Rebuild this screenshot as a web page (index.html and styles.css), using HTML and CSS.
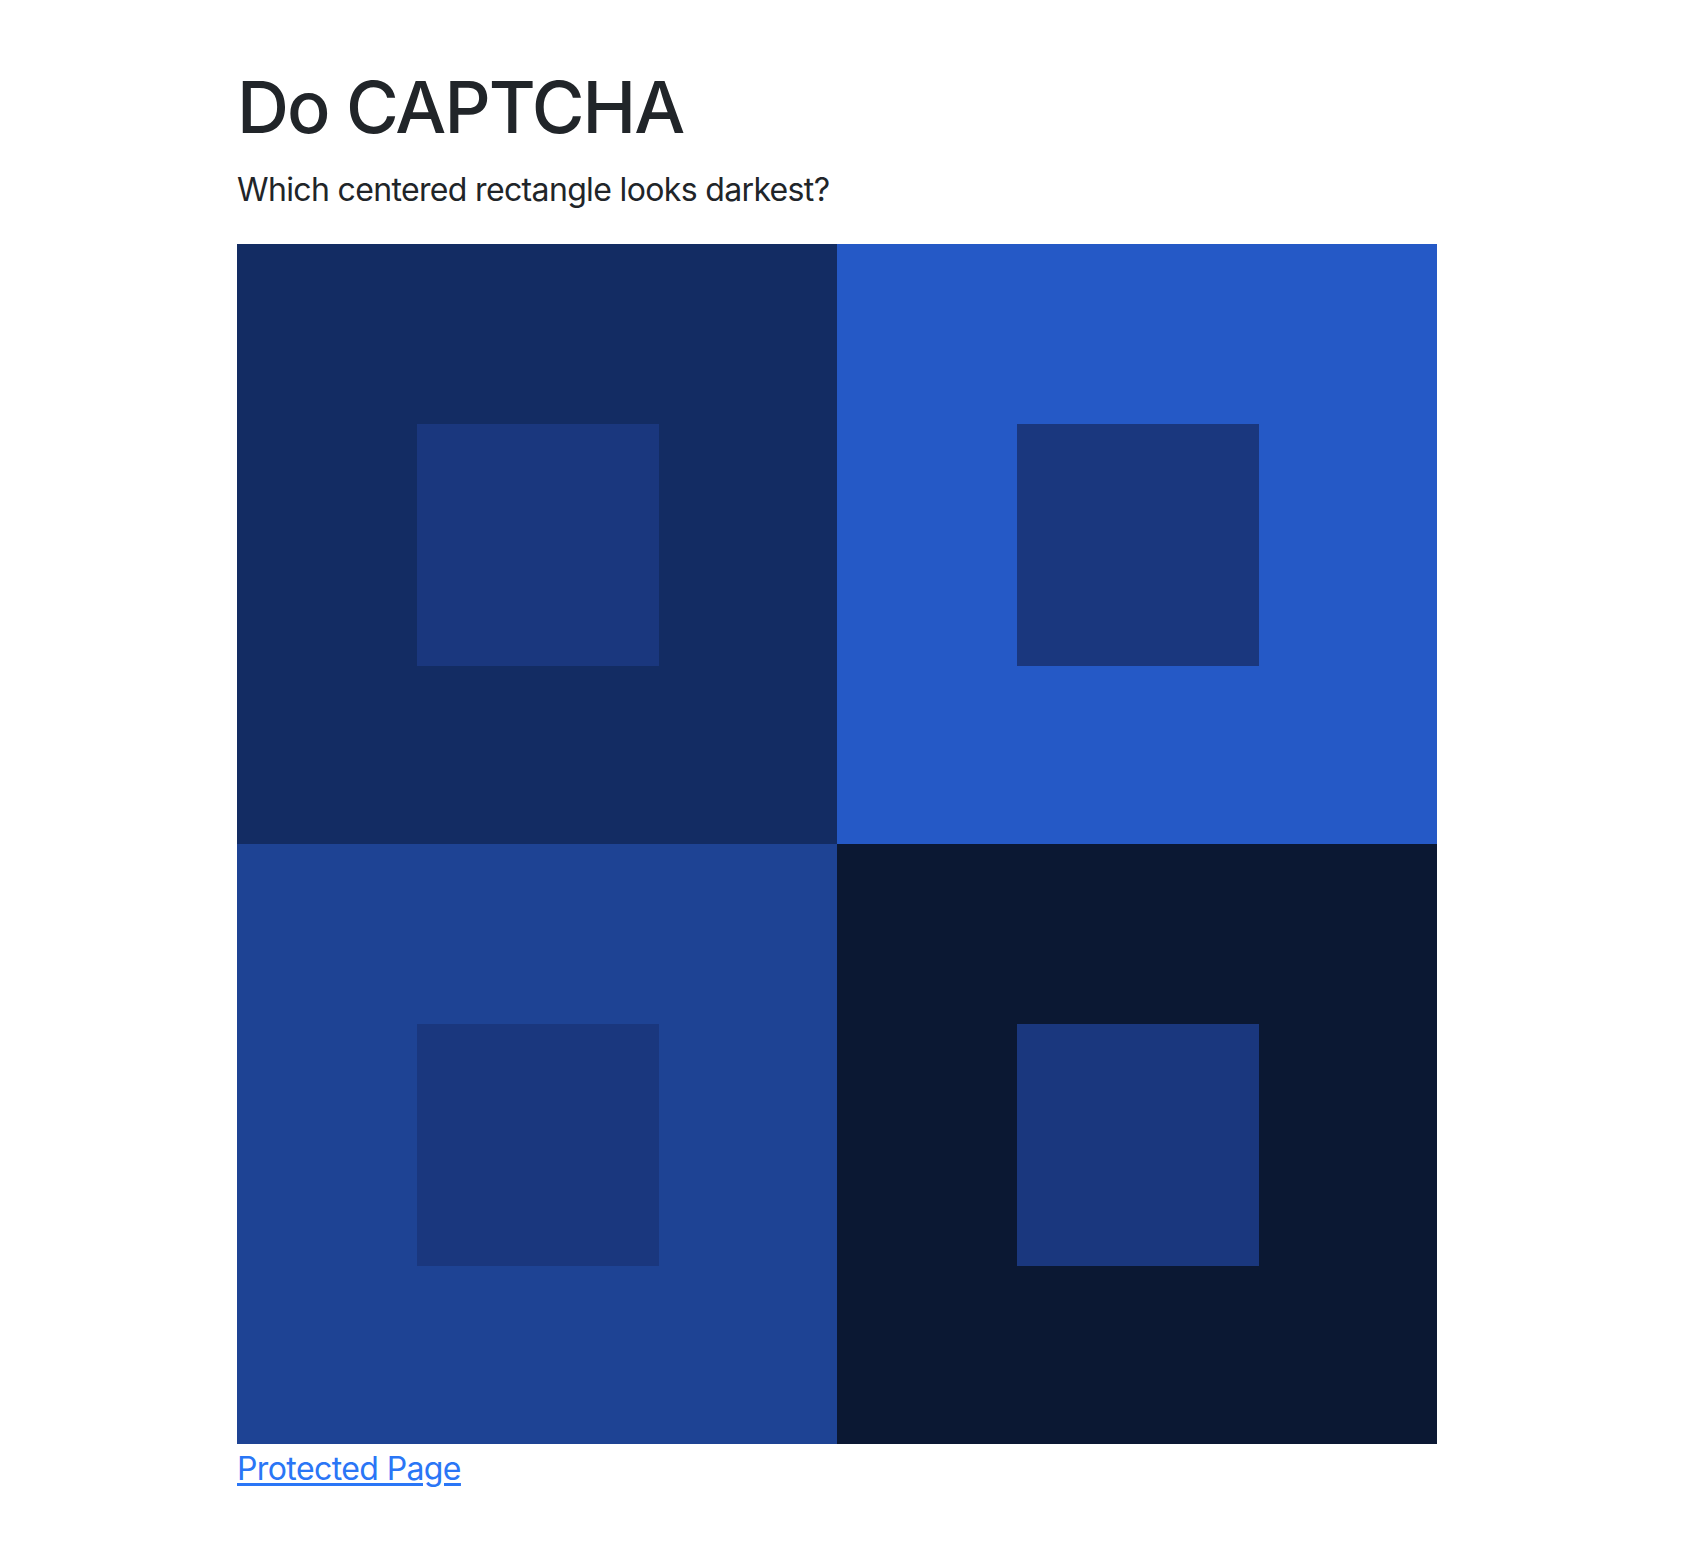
FILE: index.html
```html
<!DOCTYPE html>
<html lang="en">
<head>
<meta charset="utf-8">
<title>Do CAPTCHA</title>
<link rel="stylesheet" href="styles.css">
</head>
<body>
<main class="page">
  <h1 class="title">Do CAPTCHA</h1>
  <p class="question">Which centered rectangle looks darkest?</p>
  <div class="grid">
    <div class="cell cell-1"><div class="inner"></div></div>
    <div class="cell cell-2"><div class="inner"></div></div>
    <div class="cell cell-3"><div class="inner"></div></div>
    <div class="cell cell-4"><div class="inner"></div></div>
  </div>
  <a class="link" href="#">Protected Page</a>
</main>
</body>
</html>
```

FILE: styles.css
```css
html, body {
  margin: 0;
  padding: 0;
  background: #fff;
}
body {
  font-family: Inter, "Liberation Sans", sans-serif;
  color: #212529;
}
.page {
  padding: 64px 0 0 237px;
}
.title {
  margin: 0;
  font-size: 72px;
  font-weight: 500;
  line-height: 1.2;
  letter-spacing: -1.9px;
}
.question {
  margin: 16px 0 0 0;
  font-size: 32px;
  line-height: 48px;
  letter-spacing: -0.65px;
}
.grid {
  margin-top: 30px;
  width: 1200px;
  height: 1200px;
  display: grid;
  grid-template-columns: 600px 600px;
  grid-template-rows: 600px 600px;
}
.cell {
  box-sizing: border-box;
  padding: 180px 0 0 180px;
}
.inner {
  width: 242px;
  height: 242px;
  background: #1a377e;
}
.cell-1 { background: #132c63; }
.cell-2 { background: #2559c6; }
.cell-3 { background: #1e4394; }
.cell-4 { background: #0b1833; }
.link {
  display: inline-block;
  margin-top: 1px;
  font-size: 32px;
  line-height: 48px;
  letter-spacing: -0.6px;
  color: #2a76f6;
  text-decoration: underline;
  text-underline-offset: 3px;
}
```
